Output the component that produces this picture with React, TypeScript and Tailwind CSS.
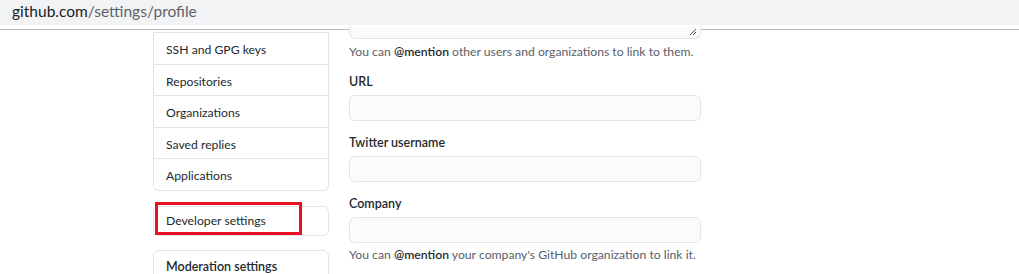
const font = { fontFamily: '"Segoe UI", Lato, "Liberation Sans", sans-serif' }

const menu = ["SSH and GPG keys", "Repositories", "Organizations", "Saved replies", "Applications"]

const Field = ({ label, help }: { label: string; help?: React.ReactNode }) => (
  <div className="flex flex-col">
    <label className="text-[12.5px] font-semibold text-[#24292e] leading-[18px]">{label}</label>
    <div className="mt-[4px] h-[26px] w-[352px] rounded-[6px] border border-[#e1e4e8] bg-[#fafbfc]" />
    {help && <p className="mt-[3px] text-[12.2px] leading-[18px] text-[#586069]">{help}</p>}
  </div>
)

export default function App() {
  return (
    <div className="h-[274px] w-[1019px] overflow-hidden bg-white" style={font}>
      <div className="h-[25px] bg-[#f1f3f4] pl-[12px] text-[15.5px] leading-[23px]">
        <span className="text-[#202124]">github.com</span>
        <span className="text-[#5f6368]">/settings/profile</span>
      </div>
      <div className="mt-[4px] h-px bg-[#bcbcbc]" />

      <div className="flex pl-[153px] gap-[20px]">
        {/* sidebar */}
        <div className="w-[176px] flex flex-col">
          <div className="border-x border-b border-[#e1e4e8] rounded-b-[6px] mt-[2px]">
            {menu.map(item => (
              <div key={item} className="h-[31.5px] border-t border-[#e1e4e8] pl-[12px] pt-[4px] flex items-center text-[12.2px] text-[#24292e]">
                {item}
              </div>
            ))}
          </div>
          <div className="relative mt-[15px] h-[30px] rounded-[6px] border border-[#e1e4e8] pl-[12px] pt-[1px] flex items-center text-[12.2px] text-[#24292e]">
            Developer settings
            <div className="absolute left-[1px] top-[-5px] h-[33px] w-[147px] border-[3px] border-[#e81123]" />
          </div>
          <div className="mt-[14px] h-[40px] rounded-t-[6px] border border-[#e1e4e8] pl-[12px] pt-[7px] text-[12.5px] font-semibold text-[#24292e]">
            Moderation settings
          </div>
        </div>

        {/* main */}
        <div className="flex flex-col">
          <div className="relative -mt-[4px] h-[13px] w-[352px] rounded-b-[6px] border border-t-0 border-[#e1e4e8] bg-[#fafbfc]">
            <svg className="absolute right-[3px] bottom-[2px]" width="8" height="8" viewBox="0 0 8 8">
              <path d="M1 7 L7 1 M4 7 L7 4" stroke="#555" strokeWidth="1" />
            </svg>
          </div>
          <p className="mt-[4px] text-[12.2px] leading-[18px] text-[#586069]">
            You can <b className="text-[#24292e] font-semibold">@mention</b> other users and organizations to link to them.
          </p>
          <div className="mt-[12px]">
            <Field label="URL" />
          </div>
          <div className="mt-[13px]">
            <Field label="Twitter username" />
          </div>
          <div className="mt-[13px]">
            <Field
              label="Company"
              help={<>You can <b className="text-[#24292e] font-semibold">@mention</b> your company's GitHub organization to link it.</>}
            />
          </div>
        </div>
      </div>
    </div>
  )
}
